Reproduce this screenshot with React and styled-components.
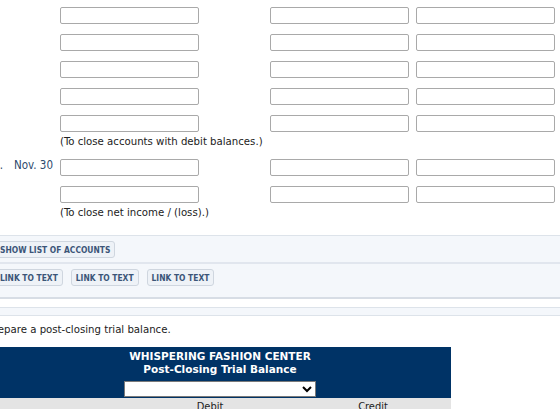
import React from "react";
import styled, { createGlobalStyle } from "styled-components";

const GlobalStyle = createGlobalStyle`
    body {
        margin: 0;
        background: #ffffff;
        font-family: "DejaVu Sans Condensed", "DejaVu Sans", Verdana, sans-serif;
        color: #222222;
        overflow: hidden;
    }
`;

const entries = [
    {
        num: "",
        date: "",
        lines: 5,
        note: "(To close accounts with debit balances.)",
    },
    {
        num: "14.",
        date: "Nov. 30",
        lines: 2,
        note: "(To close net income / (loss).)",
    },
];

export default function App() {
    return (
        <Page>
            <GlobalStyle />
            <Journal>
                {entries.map((entry, i) => (
                    <Entry key={i}>
                        {Array.from({ length: entry.lines }).map((_, j) => (
                            <Row key={j}>
                                <Num>{j === 0 ? entry.num : ""}</Num>
                                <DateCell>{j === 0 ? entry.date : ""}</DateCell>
                                <Field />
                                <span />
                                <Field />
                                <span />
                                <Field />
                            </Row>
                        ))}
                        <Note>{entry.note}</Note>
                    </Entry>
                ))}
            </Journal>

            <Toolbar>
                <ToolRow>
                    <SmallButton>SHOW LIST OF ACCOUNTS</SmallButton>
                </ToolRow>
                <ToolRow last>
                    <SmallButton>LINK TO TEXT</SmallButton>
                    <SmallButton>LINK TO TEXT</SmallButton>
                    <SmallButton>LINK TO TEXT</SmallButton>
                </ToolRow>
            </Toolbar>
            <Spacer />

            <Instruction>Prepare a post-closing trial balance.</Instruction>

            <Trial>
                <TrialHead>
                    <Company>WHISPERING FASHION CENTER</Company>
                    <Subtitle>Post-Closing Trial Balance</Subtitle>
                    <PeriodSelect>
                        <option></option>
                    </PeriodSelect>
                </TrialHead>
                <ColumnRow>
                    <span />
                    <ColLabel>Debit</ColLabel>
                    <ColLabel>Credit</ColLabel>
                </ColumnRow>
            </Trial>
        </Page>
    );
}

const Page = styled.div`
    display: flex;
    flex-direction: column;
    margin-left: -24px;
    padding-top: 7px;
    width: 620px;
`;

const Journal = styled.div`
    display: flex;
    flex-direction: column;
    gap: 9px;
`;

const Entry = styled.div`
    display: flex;
    flex-direction: column;
    gap: 10px;
`;

const Row = styled.div`
    display: grid;
    grid-template-columns: 27px 57px 139px 71px 139px 7px 139px;
    align-items: start;
    height: 17px;
`;

const Num = styled.div`
    font-size: 11.5px;
    color: #2d4a6e;
    text-align: right;
    line-height: 13px;
`;

const DateCell = styled.div`
    font-size: 11.5px;
    color: #2d4a6e;
    padding-left: 11px;
    line-height: 13px;
`;

const Field = styled.input`
    box-sizing: border-box;
    width: 139px;
    height: 17px;
    margin: 0;
    border: 1px solid #a9a9a9;
    border-radius: 2px;
    background: #ffffff;
`;

const Note = styled.div`
    margin-left: 84px;
    margin-top: -8px;
    font-size: 11.3px;
    line-height: 16px;
    color: #222222;
`;

const Toolbar = styled.div`
    margin-top: 14px;
    border-top: 1px solid #dde3ea;
    border-bottom: 2px solid #d7dde5;
    background: #f4f7fb;
`;

const ToolRow = styled.div`
    display: flex;
    gap: 8px;
    padding: 5px 0 ${(p) => (p.last ? "11px" : "4px")} 19px;
    border-bottom: ${(p) => (p.last ? "none" : "2px solid #e1e6ee")};
`;

const SmallButton = styled.button`
    box-sizing: border-box;
    height: 17px;
    padding: 0 4px;
    border: 1px solid #cfd6df;
    border-radius: 3px;
    background: #eef2f7;
    color: #3b5578;
    font-family: "DejaVu Sans Condensed", "DejaVu Sans", Verdana, sans-serif;
    font-size: 8.4px;
    font-weight: bold;
`;

const Spacer = styled.div`
    margin-top: 8px;
    height: 7px;
    border-top: 1px solid #dde3ea;
    border-bottom: 1px solid #dde3ea;
    background: #f4f7fb;
`;

const Instruction = styled.div`
    margin-top: 6px;
    margin-left: 12px;
    font-size: 11.3px;
    line-height: 16px;
    color: #222222;
`;

const Trial = styled.div`
    margin-top: 9px;
    margin-left: 13px;
    width: 462px;
`;

const TrialHead = styled.div`
    display: flex;
    flex-direction: column;
    align-items: center;
    padding-top: 3px;
    background: #003366;
    color: #ffffff;
`;

const Company = styled.div`
    font-family: "DejaVu Sans", Verdana, sans-serif;
    font-size: 10.5px;
    font-weight: bold;
    line-height: 13px;
`;

const Subtitle = styled.div`
    font-family: "DejaVu Sans", Verdana, sans-serif;
    font-size: 10.5px;
    font-weight: bold;
    line-height: 13px;
`;

const PeriodSelect = styled.select`
    box-sizing: border-box;
    width: 192px;
    height: 16px;
    margin: 5px 0 1px;
    border: 1px solid #7a7a7a;
    background: #ffffff;
    font-size: 10px;
`;

const ColumnRow = styled.div`
    display: grid;
    grid-template-columns: 136px 170px 156px;
    background: #e4e4e4;
    height: 20px;
`;

const ColLabel = styled.div`
    text-align: center;
    font-size: 11px;
    line-height: 18px;
    color: #222222;
`;
